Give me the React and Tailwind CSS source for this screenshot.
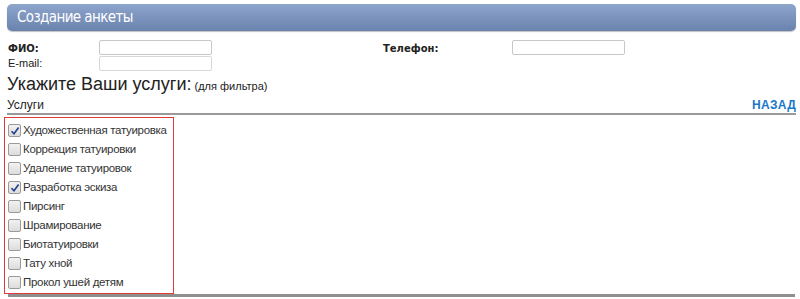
import React from 'react';

const services = [
  { label: 'Художественная татуировка', checked: true },
  { label: 'Коррекция татуировки', checked: false },
  { label: 'Удаление татуировок', checked: false },
  { label: 'Разработка эскиза', checked: true },
  { label: 'Пирсинг', checked: false },
  { label: 'Шрамирование', checked: false },
  { label: 'Биотатуировки', checked: false },
  { label: 'Тату хной', checked: false },
  { label: 'Прокол ушей детям', checked: false },
];

const Box = ({ checked }) => (
  <span className="w-[13px] h-[13px] shrink-0 border border-[#9a9a9a] rounded-[2px] bg-gradient-to-b from-[#f2f2f2] to-[#dcdcdc] flex items-center justify-center">
    {checked && (
      <svg width="10" height="10" viewBox="0 0 10 10">
        <path d="M1.5 5.2 L4 7.8 L8.6 1.6" fill="none" stroke="#1f3f8f" strokeWidth="1.6" />
      </svg>
    )}
  </span>
);

const App = () => {
  return (
    <div className="w-[800px] h-[299px] bg-white overflow-hidden font-['Liberation_Sans',Arial,sans-serif] text-[#222]">
      {/* header bar */}
      <div className="pt-[4px] pl-[7px] pr-[4px]">
        <div className="h-[27px] rounded-[5px] bg-gradient-to-b from-[#8ea5cc] to-[#6a83ae] shadow-[0_1px_1px_rgba(0,0,0,0.25)] flex items-center pl-[10px]">
          <span className="text-white text-[15px] font-['DejaVu_Sans',sans-serif] font-stretch-condensed tracking-[-0.6px]">Создание анкеты</span>
        </div>
      </div>

      {/* contacts */}
      <div className="flex pl-[8px] mt-[9px]">
        <div className="w-[91px] flex flex-col text-[11px] leading-[15px]">
          <span className="font-bold font-['DejaVu_Sans',sans-serif] text-[10px] pt-[1px]">ФИО:</span>
          <span>E-mail:</span>
        </div>
        <div className="flex flex-col gap-[1px]">
          <div className="w-[113px] h-[15px] border border-[#c8c8c8] rounded-[2px]" />
          <div className="w-[113px] h-[15px] border border-[#d8d8d8] rounded-[2px]" />
        </div>
        <span className="ml-[171px] w-[129px] font-bold font-['DejaVu_Sans',sans-serif] text-[10px] leading-[15px] pt-[1px]">Телефон:</span>
        <div className="w-[113px] h-[15px] border border-[#c8c8c8] rounded-[2px]" />
      </div>

      {/* title */}
      <div className="pl-[7px] mt-[4px] leading-[18px]">
        <span className="text-[18px]">Укажите Ваши услуги:</span>
        <span className="text-[11px] ml-[3px]">(для фильтра)</span>
      </div>

      {/* services header */}
      <div className="ml-[7px] mr-[4px] mt-[3px] flex items-end justify-between border-b-2 border-[#9a9a9a] pb-[1px] leading-[14px]">
        <span className="text-[12px]">Услуги</span>
        <span className="text-[12px] font-bold text-[#1a78c8] tracking-[0.3px]">НАЗАД</span>
      </div>

      {/* list */}
      <div className="ml-[4px] mt-[2px] w-[170px] border border-[#e03a3a] pt-[3px] pb-[1px] flex flex-col">
        {services.map((s) => (
          <div key={s.label} className="flex items-center gap-[2px] h-[19px] pl-[3px]">
            <Box checked={s.checked} />
            <span className="whitespace-nowrap text-[11.5px] text-[#333] tracking-[-0.3px]">{s.label}</span>
          </div>
        ))}
      </div>
      <div className="ml-[8px] mr-[5px] h-[3px] bg-[#8f8f8f]" />
    </div>
  );
};

export default App;
